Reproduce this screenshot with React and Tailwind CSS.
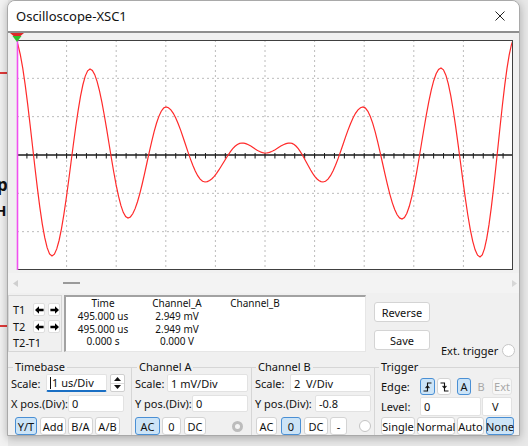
import React from "react";

const EXT = [
  [13, 36], [52, 256], [90, 69], [128, 218], [166, 107], [205, 182], [242, 143],
  [265.5, 153], [290, 143], [323, 182], [363, 107], [402, 219], [441, 68], [480, 257], [516, 36],
];

function wavePath() {
  let d = "";
  for (let i = 0; i < EXT.length - 1; i++) {
    const [x1, y1] = EXT[i];
    const [x2, y2] = EXT[i + 1];
    for (let k = 0; k <= 16; k++) {
      if (i > 0 && k === 0) continue;
      const s = k / 16;
      const x = x1 + (x2 - x1) * s;
      const y = y1 + (y2 - y1) * (1 - Math.cos(Math.PI * s)) / 2;
      d += (d ? "L" : "M") + x.toFixed(2) + " " + y.toFixed(2);
    }
  }
  return d;
}

function Scope() {
  const vx = [];
  for (let i = 1; i < 10; i++) vx.push(17 + i * 49.6);
  const hy = [];
  for (let j = 1; j < 6; j++) if (j !== 3) hy.push(40 + j * (230 / 6));
  const ticks = [];
  for (let k = 1; k < 50; k++) ticks.push(17 + k * 9.92);
  return (
    <svg width="511" height="240" viewBox="8 33 511 240" className="block">
      <defs>
        <clipPath id="plotclip">
          <rect x="17" y="40" width="496" height="230" />
        </clipPath>
      </defs>
      <rect x="17" y="40" width="496" height="230" fill="#ffffff" />
      {vx.map((x) => (
        <line key={"v" + x} x1={x} y1="40" x2={x} y2="270" stroke="#bcbcbc" strokeDasharray="2 3" />
      ))}
      {hy.map((y) => (
        <line key={"h" + y} x1="17" y1={y} x2="513" y2={y} stroke="#bcbcbc" strokeDasharray="2 3" />
      ))}
      <line x1="17" y1="155" x2="513" y2="155" stroke="#1a1a1a" strokeWidth="1.3" />
      {ticks.map((x) => (
        <line key={"t" + x} x1={x} y1="153" x2={x} y2="158.5" stroke="#1a1a1a" strokeWidth="1" />
      ))}
      <path d={wavePath()} fill="none" stroke="#ff2a2a" strokeWidth="1.2" clipPath="url(#plotclip)" />
      <rect x="17.5" y="40.5" width="495" height="229" fill="none" stroke="#404040" />
      <line x1="17.5" y1="40" x2="17.5" y2="270" stroke="#f050f0" strokeWidth="1.6" />
      <polygon points="10,33 24,33 17,39" fill="#e02828" />
      <polygon points="12.5,36 21.5,36 17,42" fill="#2fc02f" />
    </svg>
  );
}

function ArrowBtn({ dir }) {
  return (
    <div className="w-[12px] h-[13px] bg-white border border-[#dedede] rounded-[2px] flex items-center justify-center">
      <svg width="9" height="8" viewBox="0 0 9 8">
        {dir === "left" ? (
          <polygon points="0,4 4,0.3 4,2.7 8.6,2.7 8.6,5.3 4,5.3 4,7.7" fill="#000" />
        ) : (
          <polygon points="9,4 5,0.3 5,2.7 0.4,2.7 0.4,5.3 5,5.3 5,7.7" fill="#000" />
        )}
      </svg>
    </div>
  );
}

function Btn({ children, sel, w, ml, dim, noBorder }) {
  const base = sel
    ? "bg-[#cce4f7] border-[#4a8fd4]"
    : noBorder
    ? "bg-transparent border-transparent"
    : dim
    ? "bg-[#f7f7f7] border-[#e2e2e2]"
    : "bg-white border-[#d4d4d4]";
  return (
    <div
      className={`h-full flex items-center justify-center rounded-[3px] border text-[11px] leading-none ${base} ${w} ${ml} ${dim ? "text-[#a8a8a8]" : "text-[#111]"}`}
    >
      {children}
    </div>
  );
}

function Field({ children, w, focus }) {
  return (
    <div
      className={`h-full bg-white border rounded-[2px] flex items-center pl-[3px] text-[11px] leading-none text-[#111] ${w} ${focus ? "border-[#e2e2e2] border-b-2 border-b-[#1a6fc4]" : "border-[#e2e2e2]"}`}
    >
      {children}
    </div>
  );
}

function Title({ children, ml }) {
  return (
    <div className={`-mt-[8px] h-[14px] w-fit px-[2px] bg-[#f0f0f0] text-[11px] leading-[14px] text-[#111] ${ml}`}>
      {children}
    </div>
  );
}

function Spinner() {
  return (
    <div className="ml-[3px] w-[15px] h-full flex flex-col bg-white border border-[#cfcfcf] rounded-[2px]">
      <div className="flex-1 flex items-center justify-center border-b border-[#dcdcdc]">
        <svg width="7" height="4" viewBox="0 0 7 4">
          <polygon points="0,4 7,4 3.5,0" fill="#111" />
        </svg>
      </div>
      <div className="flex-1 flex items-center justify-center">
        <svg width="7" height="4" viewBox="0 0 7 4">
          <polygon points="0,0 7,0 3.5,4" fill="#111" />
        </svg>
      </div>
    </div>
  );
}

function EdgeIcon({ rising }) {
  return (
    <svg width="9" height="10" viewBox="0 0 9 10">
      {rising ? (
        <>
          <path d="M0.5 9 H4.5 V1 H8.5" fill="none" stroke="#111" strokeWidth="1.1" />
          <path d="M2.6 6 L4.5 4 L6.4 6" fill="none" stroke="#111" strokeWidth="1.1" />
        </>
      ) : (
        <>
          <path d="M0.5 1 H4.5 V9 H8.5" fill="none" stroke="#111" strokeWidth="1.1" />
          <path d="M2.6 4 L4.5 6 L6.4 4" fill="none" stroke="#111" strokeWidth="1.1" />
        </>
      )}
    </svg>
  );
}

export default function App() {
  return (
    <div className="relative w-[528px] h-[446px] overflow-hidden bg-[#e8e8e8] font-['Noto_Sans',sans-serif] text-[#111]">
      {/* background schematic bits behind the window */}
      <div className="absolute left-0 top-0 w-[8px] h-[446px] bg-[#f2f2f2]" />
      <div className="absolute left-0 top-[72px] w-[8px] h-[2px] bg-[#e03a3a]" />
      <div className="absolute left-0 top-[325px] w-[8px] h-[2px] bg-[#e03a3a]" />
      <span className="absolute left-[-3px] top-[176px] text-[17px] font-bold leading-none">p</span>
      <span className="absolute left-[-5px] top-[203px] text-[15px] font-bold leading-none">H</span>

      <div className="relative z-10 ml-[7px] w-[513px] h-[436px] border border-[#a9a9a9] rounded-t-[8px] bg-[#f0f0f0] shadow-[0_2px_10px_rgba(0,0,0,0.28)] flex flex-col">
        {/* title bar */}
        <div className="h-[30px] bg-white rounded-t-[7px] flex items-center justify-between pl-[8px] pr-[14px]">
          <span className="text-[13px] leading-none text-[#111]">Oscilloscope-XSC1</span>
          <svg width="10" height="10" viewBox="0 0 10 10">
            <path d="M0.5 0.5 L9.5 9.5 M9.5 0.5 L0.5 9.5" stroke="#222" strokeWidth="1" />
          </svg>
        </div>
        <div className="h-[2px] bg-[#8e8e8e]" />

        <Scope />

        {/* scrollbar */}
        <div className="h-[20px] flex items-center bg-[#f3f3f3]">
          <svg width="5" height="7" viewBox="0 0 5 7" className="ml-[5px]">
            <polygon points="5,0 5,7 0,3.5" fill="#cfcfcf" />
          </svg>
          <div className="ml-[45px] w-[17px] h-[1.5px] bg-[#9a9a9a]" />
          <svg width="5" height="7" viewBox="0 0 5 7" className="ml-auto mr-[2px]">
            <polygon points="0,0 0,7 5,3.5" fill="#d6d6d6" />
          </svg>
        </div>

        {/* cursor readout panel */}
        <div className="mt-[2px] h-[57px] flex">
          <div className="w-[54px] h-full border border-[#d6d6d6] flex flex-col pt-[7px] text-[11px] leading-none">
            <div className="flex h-[13px] items-center">
              <span className="pl-[4px] w-[24px]">T1</span>
              <ArrowBtn dir="left" />
              <div className="ml-[3px]">
                <ArrowBtn dir="right" />
              </div>
            </div>
            <div className="flex h-[13px] mt-[4px] items-center">
              <span className="pl-[4px] w-[24px]">T2</span>
              <ArrowBtn dir="left" />
              <div className="ml-[3px]">
                <ArrowBtn dir="right" />
              </div>
            </div>
            <div className="mt-[3px] pl-[4px] h-[13px] flex items-center">T2-T1</div>
          </div>

          <div className="ml-[2px] w-[302px] h-full bg-white border-t-2 border-l-2 border-[#a2a2a2] border-r border-b border-r-[#e6e6e6] border-b-[#e6e6e6] grid grid-cols-[74px_74px_82px] content-start text-[10px] leading-[12.8px] text-center text-[#111]">
            <div>Time</div>
            <div>Channel_A</div>
            <div>Channel_B</div>
            <div>495.000 us</div>
            <div>2.949 mV</div>
            <div></div>
            <div>495.000 us</div>
            <div>2.949 mV</div>
            <div></div>
            <div>0.000 s</div>
            <div>0.000 V</div>
            <div></div>
          </div>

          <div className="ml-[8px] w-[56px] flex flex-col pt-[7px]">
            <div className="h-[20px] bg-white border border-[#d4d4d4] rounded-[3px] flex items-center justify-center text-[11px] leading-none">
              Reverse
            </div>
            <div className="mt-[8px] h-[20px] bg-white border border-[#d4d4d4] rounded-[3px] flex items-center justify-center text-[11px] leading-none">
              Save
            </div>
          </div>

          <div className="ml-[11px] h-full pt-[49px] flex items-start">
            <div className="flex items-center h-[13px]">
              <span className="text-[11px] leading-none">Ext. trigger</span>
              <div className="ml-[4px] w-[13px] h-[13px] rounded-full bg-white border border-[#c6c6c6]" />
            </div>
          </div>
        </div>

        {/* controls */}
        <div className="h-[83px] flex pt-[15px]">
          {/* Timebase */}
          <div className="w-[124px] border-t border-r border-[#d6d6d6] flex flex-col">
            <Title ml="ml-[5px]">Timebase</Title>
            <div className="flex h-[18px] items-center text-[11px] leading-none">
              <span className="ml-[3px] w-[35px]">Scale:</span>
              <Field w="w-[61px]" focus>
                <span className="w-[1px] h-[12px] bg-[#111] mr-[1px]" />1 us/Div
              </Field>
              <Spinner />
            </div>
            <div className="flex h-[17px] mt-[3px] items-center text-[11px] leading-none">
              <span className="ml-[3px] w-[57px]">X pos.(Div):</span>
              <Field w="w-[56px]">0</Field>
            </div>
            <div className="flex h-[18px] mt-[5px]">
              <Btn sel w="w-[22px]" ml="ml-[7px]">Y/T</Btn>
              <Btn w="w-[26px]" ml="ml-[3px]">Add</Btn>
              <Btn w="w-[25px]" ml="ml-[2px]">B/A</Btn>
              <Btn w="w-[25px]" ml="ml-[2px]">A/B</Btn>
            </div>
          </div>

          {/* Channel A */}
          <div className="w-[120px] border-t border-r border-[#d6d6d6] flex flex-col">
            <Title ml="ml-[5px]">Channel A</Title>
            <div className="flex h-[18px] items-center text-[11px] leading-none">
              <span className="ml-[3px] w-[32px]">Scale:</span>
              <Field w="w-[81px]">1 mV/Div</Field>
            </div>
            <div className="flex h-[17px] mt-[3px] items-center text-[11px] leading-none">
              <span className="ml-[3px] w-[57px]">Y pos.(Div):</span>
              <Field w="w-[56px]">0</Field>
            </div>
            <div className="flex h-[18px] mt-[5px] items-center">
              <Btn sel w="w-[25px]" ml="ml-[3px]">AC</Btn>
              <Btn w="w-[19px]" ml="ml-[2px]">0</Btn>
              <Btn w="w-[22px]" ml="ml-[3px]">DC</Btn>
              <div className="ml-[26px] w-[11px] h-[11px] rounded-full bg-[#f4f4f4] border-[3px] border-[#bcbcbc]" />
            </div>
          </div>

          {/* Channel B */}
          <div className="w-[123px] border-t border-r border-[#d6d6d6] flex flex-col">
            <Title ml="ml-[4px]">Channel B</Title>
            <div className="flex h-[18px] items-center text-[11px] leading-none">
              <span className="ml-[3px] w-[35px]">Scale:</span>
              <Field w="w-[81px]">2&nbsp;&nbsp;V/Div</Field>
            </div>
            <div className="flex h-[17px] mt-[3px] items-center text-[11px] leading-none">
              <span className="ml-[3px] w-[60px]">Y pos.(Div):</span>
              <Field w="w-[56px]">-0.8</Field>
            </div>
            <div className="flex h-[18px] mt-[5px] items-center">
              <Btn w="w-[21px]" ml="ml-[4px]">AC</Btn>
              <Btn sel w="w-[20px]" ml="ml-[4px]">0</Btn>
              <Btn w="w-[24px]" ml="ml-[3px]">DC</Btn>
              <Btn w="w-[17px]" ml="ml-[2px]">-</Btn>
              <div className="ml-[12px] w-[12px] h-[12px] rounded-full bg-white border border-[#c4c4c4]" />
            </div>
          </div>

          {/* Trigger */}
          <div className="flex-1 border-t border-[#d6d6d6] flex flex-col">
            <Title ml="ml-[4px]">Trigger</Title>
            <div className="flex h-[17px] mt-[4px] items-center text-[11px] leading-none">
              <span className="ml-[6px] w-[39px]">Edge:</span>
              <Btn sel w="w-[15px]" ml="ml-0">
                <EdgeIcon rising />
              </Btn>
              <Btn w="w-[14px]" ml="ml-[2px]">
                <EdgeIcon />
              </Btn>
              <Btn sel w="w-[14px]" ml="ml-[6px]">A</Btn>
              <Btn dim noBorder w="w-[14px]" ml="ml-[3px]">B</Btn>
              <Btn dim w="w-[20px]" ml="ml-[4px]">Ext</Btn>
            </div>
            <div className="flex h-[19px] mt-[2px] items-center text-[11px] leading-none">
              <span className="ml-[6px] w-[39px]">Level:</span>
              <Field w="w-[61px]">0</Field>
              <div className="ml-[1px] w-[30px] h-full bg-white border border-[#e2e2e2] rounded-[2px] flex items-center pl-[9px]">
                V
              </div>
            </div>
            <div className="flex h-[18px] mt-[1px]">
              <Btn w="w-[34px]" ml="ml-[6px]">Single</Btn>
              <Btn w="w-[38px]" ml="ml-[2px]">Normal</Btn>
              <Btn w="w-[27px]" ml="ml-[2px]">Auto</Btn>
              <Btn sel w="w-[28px]" ml="ml-[2px]">None</Btn>
            </div>
          </div>
        </div>
      </div>
    </div>
  );
}
